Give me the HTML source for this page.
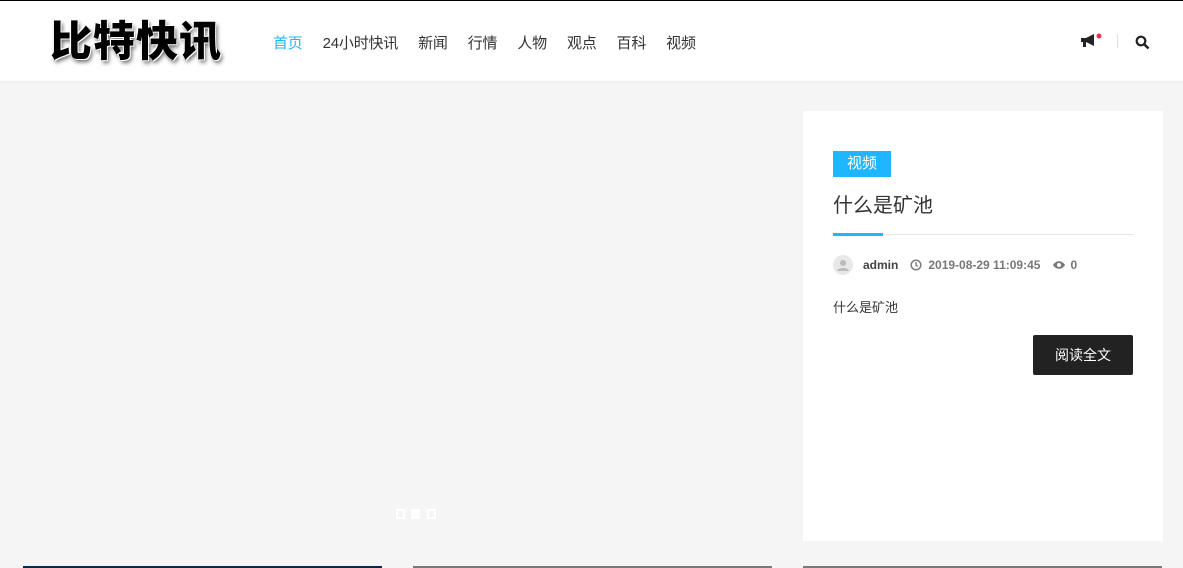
<!DOCTYPE html>
<html><head><meta charset="utf-8">
<style>
*{margin:0;padding:0;box-sizing:border-box}
body{width:1183px;height:568px;overflow:hidden;background:#f5f5f5;font-family:"Liberation Sans","Noto Sans CJK SC",sans-serif;position:relative}
.top{position:absolute;left:0;top:0;width:1183px;height:1px;background:#000}
header{position:absolute;left:0;top:1px;width:1183px;height:80px;background:#fff;box-shadow:0 1px 3px rgba(0,0,0,.05)}
.logo{position:absolute;left:50px;top:13px;font-family:"Noto Sans CJK SC",sans-serif;font-weight:900;font-size:42px;line-height:50px;color:#000;letter-spacing:1px;
text-shadow:-1px -1px 0 #fff,1px 1px 0 #fff,2px 3px 4px rgba(0,0,0,.6);}
nav{position:absolute;left:273px;top:31px;font-size:15px;color:#333;letter-spacing:-0.2px}
nav span{margin-right:20px}
nav span.a{color:#1fb6ff}
.card{position:absolute;left:803px;top:111px;width:360px;height:430px;background:#fff}
.tag{position:absolute;left:30px;top:40px;width:58px;height:26px;background:#1fb6ff;color:#fff;font-size:15px;line-height:26px;text-align:center}
.title{position:absolute;left:30px;top:78px;font-size:20px;color:#333}
.line{position:absolute;left:30px;top:123px;width:300px;height:1px;background:#e5e5e5}
.line2{position:absolute;left:30px;top:122px;width:50px;height:3px;background:#1fb6ff}
.meta{position:absolute;left:30px;top:144px;height:20px;font-size:12px;color:#777;display:flex;align-items:center;font-weight:bold}
.av{width:20px;height:20px;border-radius:50%;background:#e8e8e8;margin-right:10px}
.desc{position:absolute;left:30px;top:186px;font-size:13px;color:#333}
.btn{position:absolute;left:230px;top:224px;width:100px;height:40px;background:#222;color:#fff;border-radius:2px;font-size:14px;line-height:40px;text-align:center}
.dots{position:absolute;left:396px;top:509px}
.dots i{position:absolute;top:0;width:9px;height:10px;border:2px solid #fff}
.b{position:absolute;top:566px;height:2px;width:359px}
</style></head><body>
<div class="top"></div>
<header>
<div class="logo">比特快讯</div>
<nav><span class="a">首页</span><span>24小时快讯</span><span>新闻</span><span>行情</span><span>人物</span><span>观点</span><span>百科</span><span>视频</span></nav>
<svg style="position:absolute;left:1080px;top:31px" width="24" height="18" viewBox="0 0 24 18"><path d="M1 6h5l8-4v12l-8-4H1z" fill="#222"/><rect x="3" y="10" width="3" height="5" fill="#222"/><circle cx="19" cy="4" r="2.5" fill="#f0304e"/></svg>
<div style="position:absolute;left:1117px;top:33px;width:1px;height:14px;background:#ddd"></div>
<svg style="position:absolute;left:1135px;top:34px" width="15" height="15" viewBox="0 0 15 15"><circle cx="6" cy="6" r="4.3" fill="none" stroke="#222" stroke-width="2.2"/><path d="M9 9l4.5 4.5" stroke="#222" stroke-width="2.5"/></svg>
</header>
<div class="card">
<div class="tag">视频</div>
<div class="title">什么是矿池</div>
<div class="line"></div><div class="line2"></div>
<div class="meta"><div class="av"><svg width="20" height="20" viewBox="0 0 20 20"><circle cx="10" cy="8" r="3" fill="#bbb"/><path d="M4 16c1-4 11-4 12 0z" fill="#bbb"/></svg></div><span style="color:#444;margin-right:12px">admin</span>
<svg width="12" height="12" viewBox="0 0 12 12"><circle cx="6" cy="6" r="4.8" fill="none" stroke="#777" stroke-width="1.4"/><path d="M6 3v3.3l2 1.2" stroke="#777" stroke-width="1.3" fill="none"/></svg>
<span style="margin:0 12px 0 6px">2019-08-29 11:09:45</span>
<svg width="14" height="10" viewBox="0 0 14 10"><path d="M1 5c3-5 9-5 12 0c-3 5-9 5-12 0z" fill="#777"/><circle cx="7" cy="5" r="2" fill="#fff"/></svg>
<span style="margin-left:4px">0</span></div>
<div class="desc">什么是矿池</div>
<div class="btn">阅读全文</div>
</div>
<div class="dots"><i style="left:0"></i><i style="left:15px;background:#fff"></i><i style="left:31px"></i></div>
<div class="b" style="left:23px;background:#0a2a4a"></div>
<div class="b" style="left:413px;background:#7a7a7a"></div>
<div class="b" style="left:803px;background:#7a7a7a"></div>
</body></html>
